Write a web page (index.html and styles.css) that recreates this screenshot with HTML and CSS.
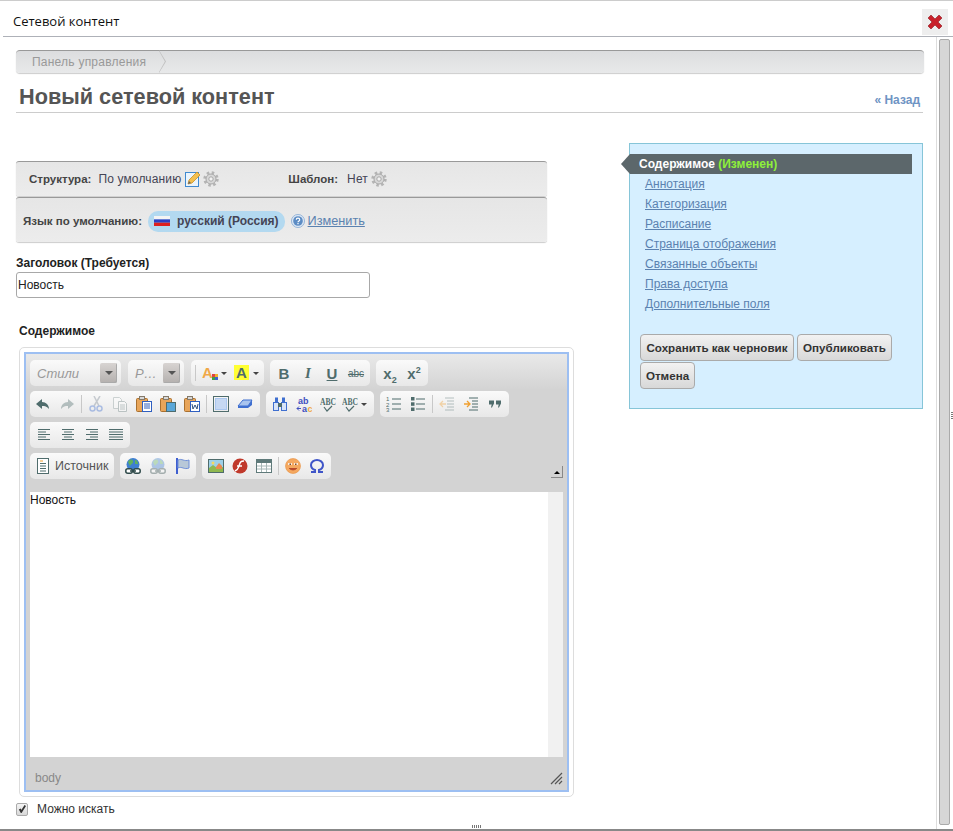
FILE: index.html
```html
<!DOCTYPE html>
<html lang="ru">
<head>
    <meta charset="UTF-8">
    <meta name="viewport" content="width=device-width, initial-scale=1.0">
    <title>Сетевой контент</title>
    <link rel="stylesheet" href="styles.css">
</head>
<body>
    <svg class="defs" xmlns="http://www.w3.org/2000/svg">
        <symbol id="gear" viewBox="0 0 16 16">
            <circle cx="8" cy="8" r="6.4" fill="none" stroke="#b4b4b4" stroke-width="2.6" stroke-dasharray="2.5 2.52"/>
            <circle cx="8" cy="8" r="5" fill="#d8d8d8" stroke="#a8a8a8"/>
            <circle cx="8" cy="8" r="2.2" fill="#f2f2f2" stroke="#a8a8a8"/>
        </symbol>
        <symbol id="edit" viewBox="0 0 16 16">
            <rect x=".5" y="1.500" width="13" height="14" fill="#eaf4fc" stroke="#3f8ad0"/>
            <path d="M3 13l1-4 8-8 3 3-8 8z" fill="#f3c04f" stroke="#c98f25" stroke-width=".8"/>
            <path d="M3 13l1-3 2 2z" fill="#666"/>
        </symbol>
        <symbol id="help" viewBox="0 0 16 16">
            <circle cx="8" cy="8" r="7.500" fill="#dce7f4" stroke="#8fb0d6"/>
            <circle cx="8" cy="8" r="5.500" fill="#5c8cc4"/>
            <path d="M6 6.500c0-2.400 4-2.400 4 0 0 1.500-2 1.500-2 3" fill="none" stroke="#fff" stroke-width="1.300"/>
            <rect x="7.300" y="10.300" width="1.400" height="1.400" fill="#fff"/>
        </symbol>
        <symbol id="flag" viewBox="0 0 16 10">
            <rect width="16" height="3.400" fill="#f4f4f4"/>
            <rect y="3.400" width="16" height="3.300" fill="#2b3fc4"/>
            <rect y="6.700" width="16" height="3.300" fill="#dd1f1f"/>
        </symbol>
        <symbol id="close" viewBox="0 0 14 14">
            <path d="M3 0l4 4 4-4 3 3-4 4 4 4-3 3-4-4-4 4-3-3 4-4-4-4z" fill="#c8202a" stroke="#8f1a20" stroke-width=".6"/>
        </symbol>
        <symbol id="undo" viewBox="0 0 16 16">
            <path d="M7 3L1 8l6 5V10c3 0 5 .5 7 3 0-4-3-7-7-7z" fill="#4f6c6c"/>
        </symbol>
        <symbol id="redo" viewBox="0 0 16 16">
            <path d="M9 3l6 5-6 5V10c-3 0-5 .5-7 3 0-4 3-7 7-7z" fill="#4f6c6c"/>
        </symbol>
        <symbol id="cut" viewBox="0 0 16 16">
            <path d="M12 0L6 10M6 0l5 10" fill="none" stroke="#7b8794" stroke-width="1.500"/>
            <circle cx="4.500" cy="12.500" r="2.500" fill="none" stroke="#3f6fd0" stroke-width="1.500"/>
            <circle cx="11.500" cy="12.500" r="2.500" fill="none" stroke="#3f6fd0" stroke-width="1.500"/>
        </symbol>
        <symbol id="copy" viewBox="0 0 16 16">
            <path d="M1.500 1.500h6l2 2v9h-8z" fill="#fff" stroke="#8a9a9a"/>
            <path d="M6.500 5.500h6l2 2v8h-8z" fill="#fff" stroke="#6b8080"/>
            <path d="M8 9h5M8 11h5M8 13h5" stroke="#6b8080"/>
        </symbol>
        <symbol id="paste" viewBox="0 0 16 16">
            <rect x=".5" y="2.500" width="11" height="13" rx="1" fill="#e8a55a" stroke="#a9702f"/>
            <rect x="3.500" y=".5" width="5" height="3" fill="#d8d8d8" stroke="#857a6a"/>
            <rect x="6.500" y="5.500" width="9" height="10" fill="#fff" stroke="#2f5fc0"/>
            <path d="M8 8h6M8 10h6M8 12h6" stroke="#2f5fc0"/>
        </symbol>
        <symbol id="pastetext" viewBox="0 0 16 16">
            <rect x=".5" y="2.500" width="11" height="13" rx="1" fill="#e8a55a" stroke="#a9702f"/>
            <rect x="3.500" y=".5" width="5" height="3" fill="#d8d8d8" stroke="#857a6a"/>
            <rect x="6.500" y="6.500" width="9" height="9" fill="#5aa7d8" stroke="#4f6c6c"/>
        </symbol>
        <symbol id="pasteword" viewBox="0 0 16 16">
            <rect x=".5" y="2.500" width="11" height="13" rx="1" fill="#e8a55a" stroke="#a9702f"/>
            <rect x="3.500" y=".5" width="5" height="3" fill="#d8d8d8" stroke="#857a6a"/>
            <rect x="6.500" y="5.500" width="9" height="10" fill="#fff" stroke="#2f5fc0"/>
            <path d="M8 8l1 5 2-4 2 4 1-5" fill="none" stroke="#2f4f7f"/>
        </symbol>
        <symbol id="maximize" viewBox="0 0 16 16">
            <rect x="2.500" y="2.500" width="11" height="11" fill="#c6d8f2" stroke="#a9c6ee"/>
            <rect x=".5" y=".5" width="15" height="15" fill="none" stroke="#4f6c6c"/>
        </symbol>
        <symbol id="eraser" viewBox="0 0 16 16">
            <path d="M1 10l5-6h9l-4 6z" fill="#a9c4ee" stroke="#3f6fd0"/>
            <path d="M1 10v2h10l4-3V4l-4 6z" fill="#3f6fd0"/>
        </symbol>
        <symbol id="find" viewBox="0 0 16 16">
            <rect x="1.500" y="6.500" width="5" height="8" fill="#d8e4f8" stroke="#3f6fd0"/>
            <rect x="9.500" y="6.500" width="5" height="8" fill="#d8e4f8" stroke="#3f6fd0"/>
            <rect x="3" y="1.500" width="3" height="5" fill="#3f6fd0"/>
            <rect x="10" y="1.500" width="3" height="5" fill="#3f6fd0"/>
            <rect x="6" y="7" width="4" height="4" fill="#4f6c6c"/>
        </symbol>
        <symbol id="replace" viewBox="0 0 16 16">
            <text x="2" y="8" class="t10 blue">ab</text>
            <text x="6" y="15.500" class="t10 blue">a</text>
            <text x="11.500" y="15.500" class="t10 orange">c</text>
            <path d="M1 12.500h4M3 10.500l-2 2 2 2" fill="none" stroke="#3f4fc0"/>
        </symbol>
        <symbol id="spell" viewBox="0 0 16 16">
            <text x="0" y="9" class="t10s teal" textLength="16" lengthAdjust="spacingAndGlyphs">ABC</text>
            <path d="M4 11l3 4 5-5" fill="none" stroke="#4f6c6c" stroke-width="1.200"/>
        </symbol>
        <symbol id="numlist" viewBox="0 0 16 16">
            <path d="M6 3h9M6 8h9M6 13h9" stroke="#4f6c6c" stroke-width="1.200"/>
            <text x="0" y="5" class="t6 teal">1</text>
            <text x="0" y="10.500" class="t6 teal">2</text>
            <text x="0" y="16" class="t6 teal">3</text>
        </symbol>
        <symbol id="bullist" viewBox="0 0 16 16">
            <path d="M6 3h9M6 8h9M6 13h9" stroke="#4f6c6c" stroke-width="1.200"/>
            <rect x="1" y="1" width="3.500" height="3.500" fill="#4f6c6c"/>
            <rect x="1" y="6.300" width="3.500" height="3.500" fill="#4f6c6c"/>
            <rect x="1" y="11.500" width="3.500" height="3.500" fill="#4f6c6c"/>
        </symbol>
        <symbol id="outdent" viewBox="0 0 16 16">
            <path d="M6 2h9M8 5h7M8 8h7M8 11h7M6 14h9" stroke="#4f6c6c"/>
            <path d="M7 8H1M4 5L1 8l3 3" fill="none" stroke="#f0a030" stroke-width="1.300"/>
        </symbol>
        <symbol id="indent" viewBox="0 0 16 16">
            <path d="M6 2h9M9 5h6M9 8h6M9 11h6M6 14h9" stroke="#4f6c6c"/>
            <path d="M1 8h6M4 5l3 3-3 3" fill="none" stroke="#f0a030" stroke-width="1.300"/>
        </symbol>
        <symbol id="quote" viewBox="0 0 16 16">
            <path d="M2 4.500h5v3l-2 4H4l.7-3H2zM9 4.500h5v3l-2 4h-1l.7-3H9z" fill="#4f6c6c"/>
        </symbol>
        <symbol id="left" viewBox="0 0 16 16">
            <path d="M2 2.500h12M2 5h8M2 7.500h12M2 10h8M2 12.500h12" stroke="#4f6c6c"/>
        </symbol>
        <symbol id="center" viewBox="0 0 16 16">
            <path d="M2 2.500h12M4 5h8M2 7.500h12M4 10h8M2 12.500h12" stroke="#4f6c6c"/>
        </symbol>
        <symbol id="right" viewBox="0 0 16 16">
            <path d="M2 2.500h12M6 5h8M2 7.500h12M6 10h8M2 12.500h12" stroke="#4f6c6c"/>
        </symbol>
        <symbol id="justify" viewBox="0 0 16 16">
            <path d="M1 2.500h14M1 5h14M1 7.500h14M1 10h14M1 12.500h14" stroke="#4f6c6c"/>
        </symbol>
        <symbol id="source" viewBox="0 0 16 16">
            <rect x="2.500" y=".5" width="11" height="15" fill="#fff" stroke="#4f6c6c"/>
            <path d="M5 3h3" stroke="#f0a030"/>
            <path d="M5 5.500h6M5 8h6M5 10.500h6M5 13h6" stroke="#4f6c6c"/>
        </symbol>
        <symbol id="link" viewBox="0 0 16 16">
            <circle cx="8" cy="6.500" r="6.500" fill="#3f7fd0"/>
            <path d="M3 4c2-3 4-3 5-1s-2 3-3 5zM10 2c2 0 3 2 3 4h-3z" fill="#60b060"/>
            <rect x=".8" y="10.800" width="6.500" height="4.400" rx="2" fill="#fff" stroke="#2f4a4a" stroke-width="1.500"/>
            <rect x="8.700" y="10.800" width="6.500" height="4.400" rx="2" fill="#fff" stroke="#2f4a4a" stroke-width="1.500"/>
            <path d="M5 13h6" stroke="#2f4a4a" stroke-width="1.500"/>
        </symbol>
        <symbol id="anchor" viewBox="0 0 16 16">
            <path d="M2 0v16" stroke="#3f5fd0" stroke-width="2"/>
            <path d="M3 2c4-2 6 2 11 0v8c-5 2-7-2-11 0z" fill="#b8c8d8" stroke="#6f8fd8"/>
        </symbol>
        <symbol id="image" viewBox="0 0 16 16">
            <rect x=".5" y="1.500" width="15" height="13" fill="#9fd0e8" stroke="#4f6c6c"/>
            <path d="M1 14V10l4-3 4 3 6-1v5z" fill="#8fb84f"/>
            <path d="M8 9l3-4 3 3v3H8z" fill="#e8894f"/>
            <circle cx="5" cy="5" r="1.500" fill="#f6d860"/>
        </symbol>
        <symbol id="flash" viewBox="0 0 16 16">
            <circle cx="8" cy="8" r="7.500" fill="#c0392b"/>
            <path d="M12 3c-4 0-4 2-5 5s-1 4-4 5M5 8h5" fill="none" stroke="#fff" stroke-width="1.500"/>
        </symbol>
        <symbol id="table" viewBox="0 0 16 16">
            <rect x=".5" y="1.500" width="15" height="13" fill="#fff" stroke="#5f7a7a"/>
            <rect x="1" y="2" width="14" height="3" fill="#5f7a7a"/>
            <path d="M5.500 5v9M10.500 5v9M1 8h14M1 11h14" stroke="#a8b8b8"/>
        </symbol>
        <symbol id="smiley" viewBox="0 0 16 16">
            <circle cx="8" cy="8" r="7.500" fill="#f4a860" stroke="#e89040" stroke-width=".6"/>
            <path d="M3 6h4M9 6h4" stroke="#fff" stroke-width="1.500"/>
            <rect x="4.500" y="5.500" width="1.500" height="1.500" fill="#7a4a2a"/>
            <rect x="10" y="5.500" width="1.500" height="1.500" fill="#7a4a2a"/>
            <path d="M4 10c2 2.500 6 2.500 8 0" fill="#b8482a" stroke="#b8482a"/>
        </symbol>
        <symbol id="omega" viewBox="0 0 16 16">
            <path d="M2 14h4v-2C3 11 2 9 2 7c0-3 3-5 6-5s6 2 6 5c0 2-1 4-4 5v2h4" fill="none" stroke="#3f55c8" stroke-width="2"/>
        </symbol>
    </svg>

    <div class="titlebar">
        <span class="title">Сетевой контент</span>
        <button class="close"><svg class="ic-close"><use href="#close"/></svg></button>
    </div>

    <div class="main">
        <div class="content">
            <div class="breadcrumb">
                <a class="crumb">Панель управления</a>
            </div>
            <div class="page-head">
                <h1>Новый сетевой контент</h1>
                <a class="back">« Назад</a>
            </div>

            <div class="columns">
                <div class="form">
                    <div class="bar bar-structure">
                        <b class="b-structure">Структура:</b>
                        <span class="s-name">По умолчанию</span>
                        <svg class="ic ic-edit"><use href="#edit"/></svg>
                        <svg class="ic ic-gear"><use href="#gear"/></svg>
                        <b class="b-template">Шаблон:</b>
                        <span class="s-name">Нет</span>
                        <svg class="ic ic-gear"><use href="#gear"/></svg>
                    </div>
                    <div class="bar bar-lang">
                        <b>Язык по умолчанию:</b>
                        <span class="pill"><svg class="ic-flag"><use href="#flag"/></svg>русский (Россия)</span>
                        <svg class="ic ic-help"><use href="#help"/></svg>
                        <a class="link">Изменить</a>
                    </div>

                    <label class="field-label">Заголовок (Требуется)</label>
                    <input class="text-input" type="text" value="Новость">

                    <div class="content-label">Содержимое</div>

                    <div class="editor-wrap">
                        <div class="editor">
                            <div class="toolbar">
                                <div class="row">
                                    <div class="group combo combo-style"><i>Стили</i><span class="drop"></span></div>
                                    <div class="group combo combo-format"><i>Р…</i><span class="drop"></span></div>
                                    <div class="group g-color">
                                        <span class="btn wide"><svg class="ic"><text x="0" y="13" class="t15 orange">A</text><rect x="10" y="9" width="3" height="3" fill="#e04040"/><rect x="13" y="9" width="3" height="3" fill="#f0b030"/><rect x="10" y="12" width="3" height="3" fill="#40a040"/><rect x="13" y="12" width="3" height="3" fill="#4060d0"/></svg><span class="caret"></span></span>
                                        <span class="btn wide"><svg class="ic"><rect width="15" height="15" fill="#ffff33"/><text x="2" y="13" class="t15 teal">A</text></svg><span class="caret"></span></span>
                                    </div>
                                    <div class="group">
                                        <span class="btn tb">B</span>
                                        <span class="btn ti">I</span>
                                        <span class="btn tu">U</span>
                                        <span class="btn ts">abc</span>
                                    </div>
                                    <div class="group">
                                        <span class="btn tb"><span>x<sub>2</sub></span></span>
                                        <span class="btn tb"><span>x<sup>2</sup></span></span>
                                    </div>
                                </div>
                                <div class="row">
                                    <div class="group g-edit">
                                        <span class="btn"><svg class="ic"><use href="#undo"/></svg></span>
                                        <span class="btn off"><svg class="ic"><use href="#redo"/></svg></span>
                                        <span class="sep"></span>
                                        <span class="btn off"><svg class="ic"><use href="#cut"/></svg></span>
                                        <span class="btn off"><svg class="ic"><use href="#copy"/></svg></span>
                                        <span class="btn"><svg class="ic"><use href="#paste"/></svg></span>
                                        <span class="btn"><svg class="ic"><use href="#pastetext"/></svg></span>
                                        <span class="btn"><svg class="ic"><use href="#pasteword"/></svg></span>
                                        <span class="sep"></span>
                                        <span class="btn"><svg class="ic"><use href="#maximize"/></svg></span>
                                        <span class="btn"><svg class="ic"><use href="#eraser"/></svg></span>
                                    </div>
                                    <div class="group">
                                        <span class="btn"><svg class="ic"><use href="#find"/></svg></span>
                                        <span class="btn"><svg class="ic"><use href="#replace"/></svg></span>
                                        <span class="btn"><svg class="ic"><use href="#spell"/></svg></span>
                                        <span class="btn wide"><svg class="ic"><use href="#spell"/></svg><span class="caret"></span></span>
                                    </div>
                                    <div class="group">
                                        <span class="btn"><svg class="ic"><use href="#numlist"/></svg></span>
                                        <span class="btn"><svg class="ic"><use href="#bullist"/></svg></span>
                                        <span class="sep"></span>
                                        <span class="btn off"><svg class="ic"><use href="#outdent"/></svg></span>
                                        <span class="btn"><svg class="ic"><use href="#indent"/></svg></span>
                                        <span class="btn"><svg class="ic"><use href="#quote"/></svg></span>
                                    </div>
                                </div>
                                <div class="row">
                                    <div class="group">
                                        <span class="btn"><svg class="ic"><use href="#left"/></svg></span>
                                        <span class="btn"><svg class="ic"><use href="#center"/></svg></span>
                                        <span class="btn"><svg class="ic"><use href="#right"/></svg></span>
                                        <span class="btn"><svg class="ic"><use href="#justify"/></svg></span>
                                    </div>
                                </div>
                                <div class="row">
                                    <div class="group g-source">
                                        <svg class="ic"><use href="#source"/></svg>
                                        <span class="source-text">Источник</span>
                                    </div>
                                    <div class="group g-link">
                                        <span class="btn"><svg class="ic"><use href="#link"/></svg></span>
                                        <span class="btn off"><svg class="ic"><use href="#link"/></svg></span>
                                        <span class="btn"><svg class="ic"><use href="#anchor"/></svg></span>
                                    </div>
                                    <div class="group">
                                        <span class="btn"><svg class="ic"><use href="#image"/></svg></span>
                                        <span class="btn"><svg class="ic"><use href="#flash"/></svg></span>
                                        <span class="btn"><svg class="ic"><use href="#table"/></svg></span>
                                        <span class="sep"></span>
                                        <span class="btn"><svg class="ic"><use href="#smiley"/></svg></span>
                                        <span class="btn"><svg class="ic"><use href="#omega"/></svg></span>
                                    </div>
                                </div>
                                <span class="collapse"></span>
                            </div>
                            <div class="edit-area">
                                <p class="edit-text">Новость</p>
                                <div class="edit-scroll"></div>
                            </div>
                            <div class="edit-foot">
                                <span>body</span>
                                <svg class="resize" viewBox="0 0 13 13"><path d="M12 1L1 12M12 5L5 12M12 9l-3 3" stroke="#555" stroke-width="1.200"/></svg>
                            </div>
                        </div>
                    </div>

                    <label class="check-row"><input type="checkbox" checked>Можно искать</label>
                </div>

                <div class="panel">
                    <div class="nav-active">Содержимое <span class="changed">(Изменен)</span></div>
                    <ul class="nav">
                        <li><a>Аннотация</a></li>
                        <li><a>Категоризация</a></li>
                        <li><a>Расписание</a></li>
                        <li><a>Страница отображения</a></li>
                        <li><a>Связанные объекты</a></li>
                        <li><a>Права доступа</a></li>
                        <li><a>Дополнительные поля</a></li>
                    </ul>
                    <div class="actions">
                        <button class="action a-draft">Сохранить как черновик</button>
                        <button class="action a-publish">Опубликовать</button>
                        <button class="action a-cancel">Отмена</button>
                    </div>
                </div>
            </div>
        </div>
        <div class="scrollbar">
            <div class="thumb"></div>
            <span class="side-grip"></span>
        </div>
    </div>

    <div class="bottom"><span class="bottom-grip"></span></div>
</body>
</html>
```

FILE: styles.css
```css
*{
    box-sizing:border-box;
}
html,body{
    height:100%;
}
body{
    margin:0;
    height:831px;
    overflow:hidden;
    display:flex;
    flex-direction:column;
    background:#fff;
    font-family:"Liberation Sans", Arial, sans-serif;
    font-size:12px;
    color:#333;
    border-top:1px solid #ccc;
}
.defs{
    display:none;
}
a{
    cursor:pointer;
}

/* title */
.titlebar{
    height:36px;
    flex:none;
    margin-left:3px;
    display:flex;
    align-items:center;
    justify-content:space-between;
    border-bottom:1px solid #aeb1b8;
    padding:0 5px 0 10px;
}
.title{
    font-family:"Open Sans", sans-serif;
    font-size:13px;
    color:#111;
    position:relative;
    top:2px;
}
.close{
    width:26px;
    height:26px;
    margin-top:7px;
    padding:0;
    border:0;
    background:#eee;
    display:flex;
    align-items:center;
    justify-content:center;
}
.ic-close{
    width:14px;
    height:14px;
}

.main{
    flex:1;
    display:flex;
    min-height:0;
}
.content{
    width:936px;
    padding:13px 12px 0 16px;
}

/* breadcrumb + head */
.breadcrumb{
    height:23px;
    background:linear-gradient(#dcdddf,#e8e9ea);
    border-top:1px solid #999;
    border-radius:4px;
    box-shadow:0 1px 1px #ccc;
    display:flex;
}
.crumb{
    position:relative;
    width:150px;
    padding-left:16px;
    line-height:22px;
    color:#999;
    letter-spacing:.23px;
}
.crumb::after{
    content:"";
    position:absolute;
    right:0;
    top:-1px;
    width:7px;
    height:23px;
    clip-path:polygon(0 0,100% 50%,0 100%,0 96%,84% 50%,0 4%);
    background:#c0c0c0;
}
.page-head{
    height:40px;
    margin-right:1px;
    border-bottom:1px solid #ccc;
    display:flex;
    justify-content:space-between;
    align-items:flex-end;
    padding:0 3px 0 3px;
}
h1{
    margin:0;
    font-size:21.7px;
    line-height:30px;
    color:#555;
}
.back{
    font-weight:bold;
    color:#6f94c4;
    font-size:12px;
    margin-bottom:5px;
}

.columns{
    display:flex;
    justify-content:space-between;
}
.form{
    width:558px;
    padding-top:48px;
}

/* bars */
.bar{
    width:531px;
    background:linear-gradient(#e6e6e6,#ececec);
    border-top:1px solid #999;
    border-radius:3px;
    box-shadow:0 1px 1px #ccc;
    display:flex;
    align-items:center;
    color:#444;
}
.bar b{
    font-size:11.5px;
}
.bar-structure{
    height:35px;
    padding-left:13px;
    margin-bottom:1px;
}
.bar-lang{
    height:45px;
    padding-left:7px;
    padding-top:2px;
}
.s-name{
    color:#445;
    letter-spacing:.15px;
}
.b-structure{
    margin-right:7px;
}
.b-template{
    margin-left:69px;
    margin-right:9px;
}
.ic{
    width:16px;
    height:16px;
    flex:none;
}
.bar .ic{
    margin-left:3px;
}
.bar .ic-edit{
    margin-left:4px;
}
.bar .ic-edit + .ic-gear{
    margin-left:2px;
}
.pill{
    display:flex;
    align-items:center;
    height:21px;
    margin-left:6px;
    padding:0 6px;
    border-radius:10px;
    background:#b3d9f0;
    font-weight:bold;
    color:#445;
}
.ic-flag{
    width:16px;
    height:10px;
    margin-right:7px;
}
.bar .ic-help{
    margin-left:6px;
    margin-right:3px;
    width:14px;
    height:14px;
}
.link{
    color:#5b82b0;
    text-decoration:underline;
    font-size:12.7px;
}

/* fields */
.field-label{
    display:block;
    margin-top:14px;
    line-height:15px;
    color:#222;
    font-weight:bold;
    font-size:12px;
}
.text-input{
    display:block;
    width:354px;
    height:26px;
    margin-top:1px;
    padding:0 1px;
    border:1px solid #a8a8a8;
    border-radius:3px;
    font-family:inherit;
    font-size:12px;
    color:#222;
}
.content-label{
    margin:26px 0 8px 3px;
    line-height:15px;
    font-weight:bold;
    color:#222;
}

/* editor */
.editor-wrap{
    margin-left:3px;
    width:555px;
    height:450px;
    border:1px solid #ddd;
    border-radius:5px;
    padding:4px;
}
.editor{
    height:100%;
    border:2px solid #9dbff2;
    background:#d3d3d3;
    display:flex;
    flex-direction:column;
    padding:0 4px;
}
.toolbar{
    position:relative;
    height:138px;
    flex:none;
    margin:0 -4px;
    padding:6px 4px 0;
    background:linear-gradient(#e9e9e9,#d3d3d3 36px);
    display:flex;
    flex-direction:column;
    gap:5px;
}
.row{
    display:flex;
    gap:6px;
}
.group{
    height:26px;
    padding:0 2px;
    border-radius:5px;
    background:linear-gradient(#fafafa,#e8e8e8);
    display:flex;
    align-items:center;
}
.btn{
    width:24px;
    height:26px;
    flex:none;
    display:flex;
    align-items:center;
    justify-content:center;
    color:#4f6c6c;
}
.off{
    opacity:.38;
}
.sep{
    width:5px;
    height:18px;
    flex:none;
    background:linear-gradient(#c8c8c8,#c8c8c8) center/1px 100% no-repeat;
}
.wide{
    width:32px;
    justify-content:flex-start;
    padding-left:2px;
}
.caret{
    margin-left:3px;
    border-left:3px solid transparent;
    border-right:3px solid transparent;
    border-top:3px solid #444;
}
.tb,.ti,.tu{
    font-size:15px;
    font-weight:bold;
}
.ti{
    font-family:"Liberation Serif", serif;
    font-style:italic;
}
.tu{
    text-decoration:underline;
}
.ts{
    font-size:10px;
    text-decoration:line-through;
}
.tb sub,.tb sup{
    font-size:9px;
    line-height:0;
}
.combo{
    justify-content:space-between;
    padding:0 4px 0 7px;
    color:#999;
    font-size:13px;
}
.combo-style{
    width:91px;
}
.combo-format{
    width:56px;
    margin:0 1px;
}
.drop{
    width:17px;
    height:20px;
    border-radius:2px;
    background:linear-gradient(#d8d4d2,#b4b0ae);
    box-shadow:inset -1px -1px 0 #aaa;
    display:flex;
    align-items:center;
    justify-content:center;
}
.drop::after{
    content:"";
    border-left:4px solid transparent;
    border-right:4px solid transparent;
    border-top:4px solid #555;
}
.g-color{
    padding:0;
    padding-left:9px;
    background:linear-gradient(#c8c8c8,#c8c8c8) 4px 50%/1px 16px no-repeat,linear-gradient(#fafafa,#e8e8e8);
}
.g-edit{
    padding:0 3px 0 1px;
}
.g-source{
    width:84px;
    padding-left:5px;
}
.source-text{
    margin-left:4px;
    color:#555;
    font-size:12.5px;
}
.g-link{
    padding:0 1px 0 0;
}
.g-link .btn{
    width:25px;
}
.collapse{
    position:absolute;
    right:4px;
    bottom:14px;
    width:12px;
    height:12px;
    border-right:1px solid #888;
    border-bottom:1px solid #888;
}
.collapse::after{
    content:"";
    position:absolute;
    left:3px;
    top:5px;
    border-left:3px solid transparent;
    border-right:3px solid transparent;
    border-bottom:3px solid #000;
}
.edit-area{
    height:265px;
    flex:none;
    background:#fff;
    display:flex;
    justify-content:space-between;
}
.edit-text{
    margin:0;
    line-height:16px;
    color:#111;
}
.edit-scroll{
    width:15px;
    background:#f1f1f1;
}
.edit-foot{
    flex:1;
    display:flex;
    align-items:center;
    justify-content:space-between;
    padding:9px 0 0 5px;
    color:#888;
}
.resize{
    width:13px;
    height:13px;
}

.check-row{
    display:flex;
    align-items:center;
    margin-top:5px;
    height:14px;
    color:#333;
}
.check-row input{
    appearance:none;
    position:relative;
    width:12px;
    height:13px;
    margin:0 9px 0 0;
    border:1px solid #aaa;
    border-radius:2px;
    background:linear-gradient(#f4f4f4,#d8d8d8);
}
.check-row input::after{
    content:"";
    position:absolute;
    inset:1px;
    background:#333;
    clip-path:polygon(10% 55%,35% 45%,42% 62%,82% 5%,100% 18%,45% 95%,35% 95%);
}

/* side panel */
.panel{
    position:relative;
    width:294px;
    height:266px;
    margin-top:30px;
    margin-right:1px;
    padding-top:10px;
    background:#d6efff;
    border:1px solid #86c5d8;
}
.nav-active{
    position:relative;
    height:20px;
    margin-right:10px;
    padding-left:9px;
    line-height:20px;
    background:#5c676b;
    color:#fff;
    font-weight:bold;
}
.nav-active::before{
    content:"";
    position:absolute;
    left:-9px;
    top:0;
    border-top:10px solid transparent;
    border-bottom:10px solid transparent;
    border-right:9px solid #5c676b;
}
.changed{
    color:#8ef03a;
}
.nav{
    list-style:none;
    margin:0;
    padding:0 0 0 15px;
}
.nav li{
    height:20px;
    line-height:20px;
}
.nav a{
    color:#5b82b0;
    text-decoration:underline;
}
.actions{
    display:flex;
    flex-wrap:wrap;
    margin-top:20px;
    padding-left:10px;
    gap:1px 3px;
}
.action{
    height:27px;
    padding:0;
    border:1px solid #aaa;
    border-radius:4px;
    background:linear-gradient(#f2f2f2,#d8d8d8);
    font-family:inherit;
    font-size:11.6px;
    font-weight:bold;
    color:#333;
}
.a-draft{
    width:154px;
}
.a-publish{
    width:95px;
}
.a-cancel{
    width:55px;
}

/* scrollbar and grips */
.scrollbar{
    position:relative;
    flex:1;
    border-left:1px solid #ddd;
    padding:2px 3px 4px 2px;
}
.thumb{
    height:100%;
    background:#d6d6d6;
    border:1px solid #aaa;
    border-radius:2px;
}
.side-grip{
    position:absolute;
    right:0;
    top:375px;
    width:2px;
    height:8px;
    background:repeating-linear-gradient(#777 0 1px,transparent 1px 2px);
}
.bottom{
    position:relative;
    height:2px;
    flex:none;
    background:#888;
}
.bottom-grip{
    position:absolute;
    left:472px;
    top:-4px;
    width:10px;
    height:3px;
    background:repeating-linear-gradient(90deg,#777 0 1px,transparent 1px 2px);
}

/* svg text */
.t15{
    font:bold 15px "Liberation Sans", sans-serif;
}
.t10{
    font:bold 9px "Liberation Sans", sans-serif;
}
.t10s{
    font:bold 10px "Liberation Serif", serif;
}
.t6{
    font:6px "Liberation Sans", sans-serif;
}
.teal{
    fill:#4f6c6c;
}
.orange{
    fill:#f0a848;
}
.blue{
    fill:#3f4fc0;
}
```
